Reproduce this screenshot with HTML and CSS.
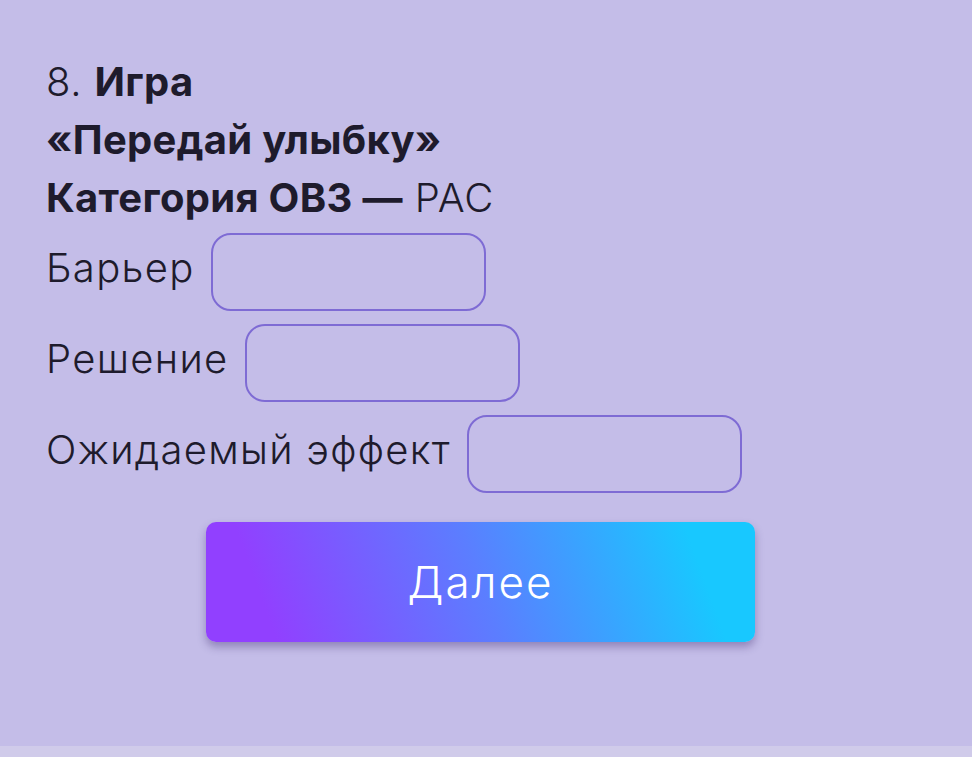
FILE: index.html
```html
<!DOCTYPE html>
<html lang="ru">
<head>
    <meta charset="UTF-8">
    <meta name="viewport" content="width=device-width, initial-scale=1.0">
    <title>Передай улыбку</title>
    <link rel="stylesheet" href="styles.css">
</head>
<body>
    <div class="screen">
        <div class="task">
            <div class="heading">
                <div class="title">8. <b>Игра</b></div>
                <div class="title"><b>«Передай улыбку»</b></div>
                <div class="title"><b>Категория ОВЗ —</b> РАС</div>
            </div>

            <div class="field">
                <label for="barrier">Барьер</label>
                <input class="answer" id="barrier" type="text">
            </div>
            <div class="field">
                <label for="solution">Решение</label>
                <input class="answer" id="solution" type="text">
            </div>
            <div class="field">
                <label for="effect">Ожидаемый эффект</label>
                <input class="answer" id="effect" type="text">
            </div>

            <button class="next-btn">Далее</button>
        </div>
    </div>
    <div class="bottom-bar"></div>
</body>
</html>
```

FILE: styles.css
```css
:root {
    --bg: #c4bde8;
    --text: #1e1b2c;
    --border: #7e6bd4;
}

body {
    margin: 0;
    padding: 0;
    background: #ffffff;
    font-family: Inter, "Open Sans", sans-serif;
    color: var(--text);
}

.screen {
    background: var(--bg);
    height: 746px;
}

.task {
    padding: 53px 46px 0;
}

.heading {
    margin-bottom: 6px;
}

.title {
    font-size: 40px;
    font-weight: 300;
    line-height: 58px;
    letter-spacing: 0.8px;
}

.title b {
    font-weight: 700;
    letter-spacing: 0.3px;
}

.field {
    display: flex;
    align-items: center;
    gap: 16px;
    margin-bottom: 13px;
    font-size: 40px;
    font-weight: 300;
    letter-spacing: 1.3px;
}

.field label {
    margin-bottom: 9px;
}

.answer {
    width: 271px;
    height: 74px;
    box-sizing: content-box;
    border: 2px solid var(--border);
    border-radius: 20px;
    background: transparent;
    padding: 0;
    margin: 0;
    outline: none;
}

.next-btn {
    display: block;
    width: 549px;
    height: 120px;
    margin: 29px 0 0 160px;
    border: none;
    border-radius: 10px;
    background: linear-gradient(70deg, #9140ff 12%, #5b7eff 50%, #18c8ff 88%);
    box-shadow: 0 5px 8px rgba(50, 30, 100, 0.35);
    color: #ffffff;
    font-family: Inter, "Open Sans", sans-serif;
    font-size: 44px;
    font-weight: 300;
    letter-spacing: 2px;
}

.bottom-bar {
    height: 11px;
    background: #d0cbea;
}
```
